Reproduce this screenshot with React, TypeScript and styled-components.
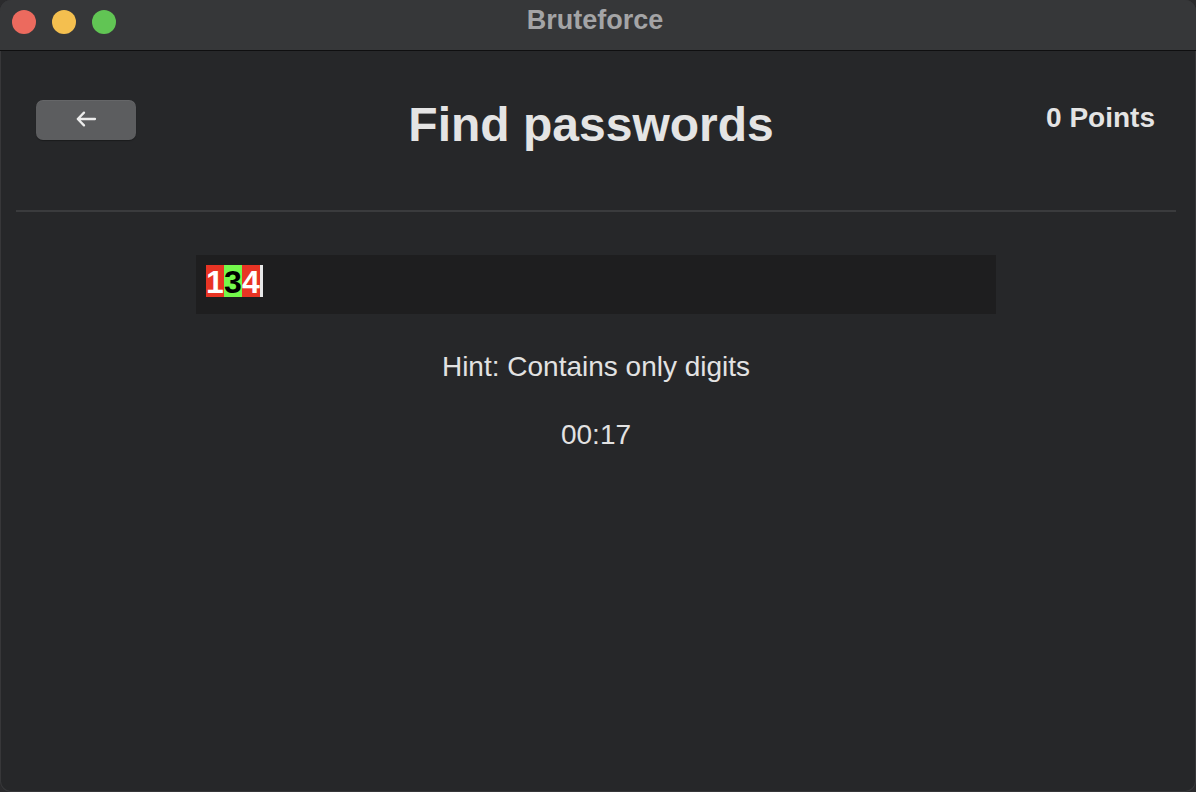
import React from "react";
import styled, { createGlobalStyle } from "styled-components";

const Global = createGlobalStyle`
  html, body { margin: 0; padding: 0; background: #2b2b2d; }
  body { font-family: "Liberation Sans", Arial, Helvetica, sans-serif; }
  #root { width: 1196px; height: 792px; }
`;

const Window = styled.div`
  width: 1196px;
  height: 792px;
  box-sizing: border-box;
  background: #262729;
  border-radius: 11px;
  overflow: hidden;
  display: flex;
  flex-direction: column;
  box-shadow: inset 0 0 0 1px rgba(255, 255, 255, 0.08);
`;

const TitleBar = styled.div`
  height: 50px;
  flex: none;
  background: #363739;
  border-bottom: 1px solid #0f0f10;
  display: grid;
  grid-template-columns: 1fr auto 1fr;
  align-items: center;
  padding: 0 12px;
`;

const Lights = styled.div`
  display: flex;
  gap: 16px;
  align-items: center;
`;

const Light = styled.span<{ $c: string }>`
  width: 24px;
  height: 24px;
  border-radius: 50%;
  background: ${(p) => p.$c};
  margin-top: -6px;
`;

const WindowTitle = styled.div`
  font-weight: 700;
  font-size: 27px;
  color: #a4a4a6;
  margin-top: -10px;
  margin-left: -6px;
`;

const Header = styled.div`
  display: flex;
  justify-content: space-between;
  align-items: flex-start;
  padding: 49px 41px 0 36px;
  height: 159px;
  box-sizing: border-box;
  flex: none;
`;

const BackButton = styled.button`
  width: 100px;
  height: 40px;
  border: none;
  border-radius: 7px;
  background: #5c5d5f;
  box-shadow: 0 1px 1px rgba(0, 0, 0, 0.3), inset 0 1px 0 rgba(255, 255, 255, 0.06);
  display: flex;
  align-items: center;
  justify-content: center;
  padding: 0 0 3px 0;
  cursor: pointer;
`;

const Title = styled.h1`
  margin: -3px 0 0 0;
  font-size: 48px;
  line-height: 55px;
  font-weight: 700;
  color: #e4e4e4;
`;

const Points = styled.div`
  margin-top: 2px;
  font-size: 28px;
  line-height: 32px;
  font-weight: 700;
  color: #e4e4e4;
`;

const Divider = styled.hr`
  margin: 0 20px 0 16px;
  border: none;
  height: 2px;
  background: #3a3b3d;
  flex: none;
`;

const Main = styled.div`
  display: flex;
  flex-direction: column;
  align-items: center;
  padding: 43px 4px 0 0;
`;

const Field = styled.div`
  width: 800px;
  height: 59px;
  box-sizing: border-box;
  background: #1e1e1f;
  padding: 10px 10px;
  display: flex;
  align-items: flex-start;
`;

const Digit = styled.span<{ $ok: boolean }>`
  display: inline-block;
  width: 18px;
  height: 32px;
  font-size: 32px;
  line-height: 34px;
  font-weight: 700;
  text-align: center;
  background: ${(p) => (p.$ok ? "#74f84b" : "#e83424")};
  color: ${(p) => (p.$ok ? "#000" : "#fff")};
`;

const Caret = styled.span`
  display: inline-block;
  width: 3px;
  height: 32px;
  background: #e8e8e8;
`;

const Hint = styled.div`
  margin-top: 37px;
  font-size: 28px;
  line-height: 32px;
  color: #e2e2e2;
`;

const Timer = styled.div`
  margin-top: 36px;
  font-size: 28px;
  line-height: 32px;
  color: #e2e2e2;
`;

const ArrowLeft = () => (
  <svg width="22" height="18" viewBox="0 0 22 18" fill="none">
    <path
      d="M20 9H2.8M9 2.6L2.8 9l6.2 6.4"
      stroke="#ececec"
      strokeWidth="2.3"
      strokeLinecap="round"
      strokeLinejoin="round"
    />
  </svg>
);

const digits: { ch: string; ok: boolean }[] = [
  { ch: "1", ok: false },
  { ch: "3", ok: true },
  { ch: "4", ok: false },
];

export default function App() {
  return (
    <>
      <Global />
      <Window>
        <TitleBar>
          <Lights>
            <Light $c="#ec6a5e" />
            <Light $c="#f4bf4f" />
            <Light $c="#61c554" />
          </Lights>
          <WindowTitle>Bruteforce</WindowTitle>
          <div />
        </TitleBar>
        <Header>
          <BackButton aria-label="Back">
            <ArrowLeft />
          </BackButton>
          <Title>Find passwords</Title>
          <Points>0 Points</Points>
        </Header>
        <Divider />
        <Main>
          <Field>
            {digits.map((d, i) => (
              <Digit key={i} $ok={d.ok}>
                {d.ch}
              </Digit>
            ))}
            <Caret />
          </Field>
          <Hint>Hint: Contains only digits</Hint>
          <Timer>00:17</Timer>
        </Main>
      </Window>
    </>
  );
}
